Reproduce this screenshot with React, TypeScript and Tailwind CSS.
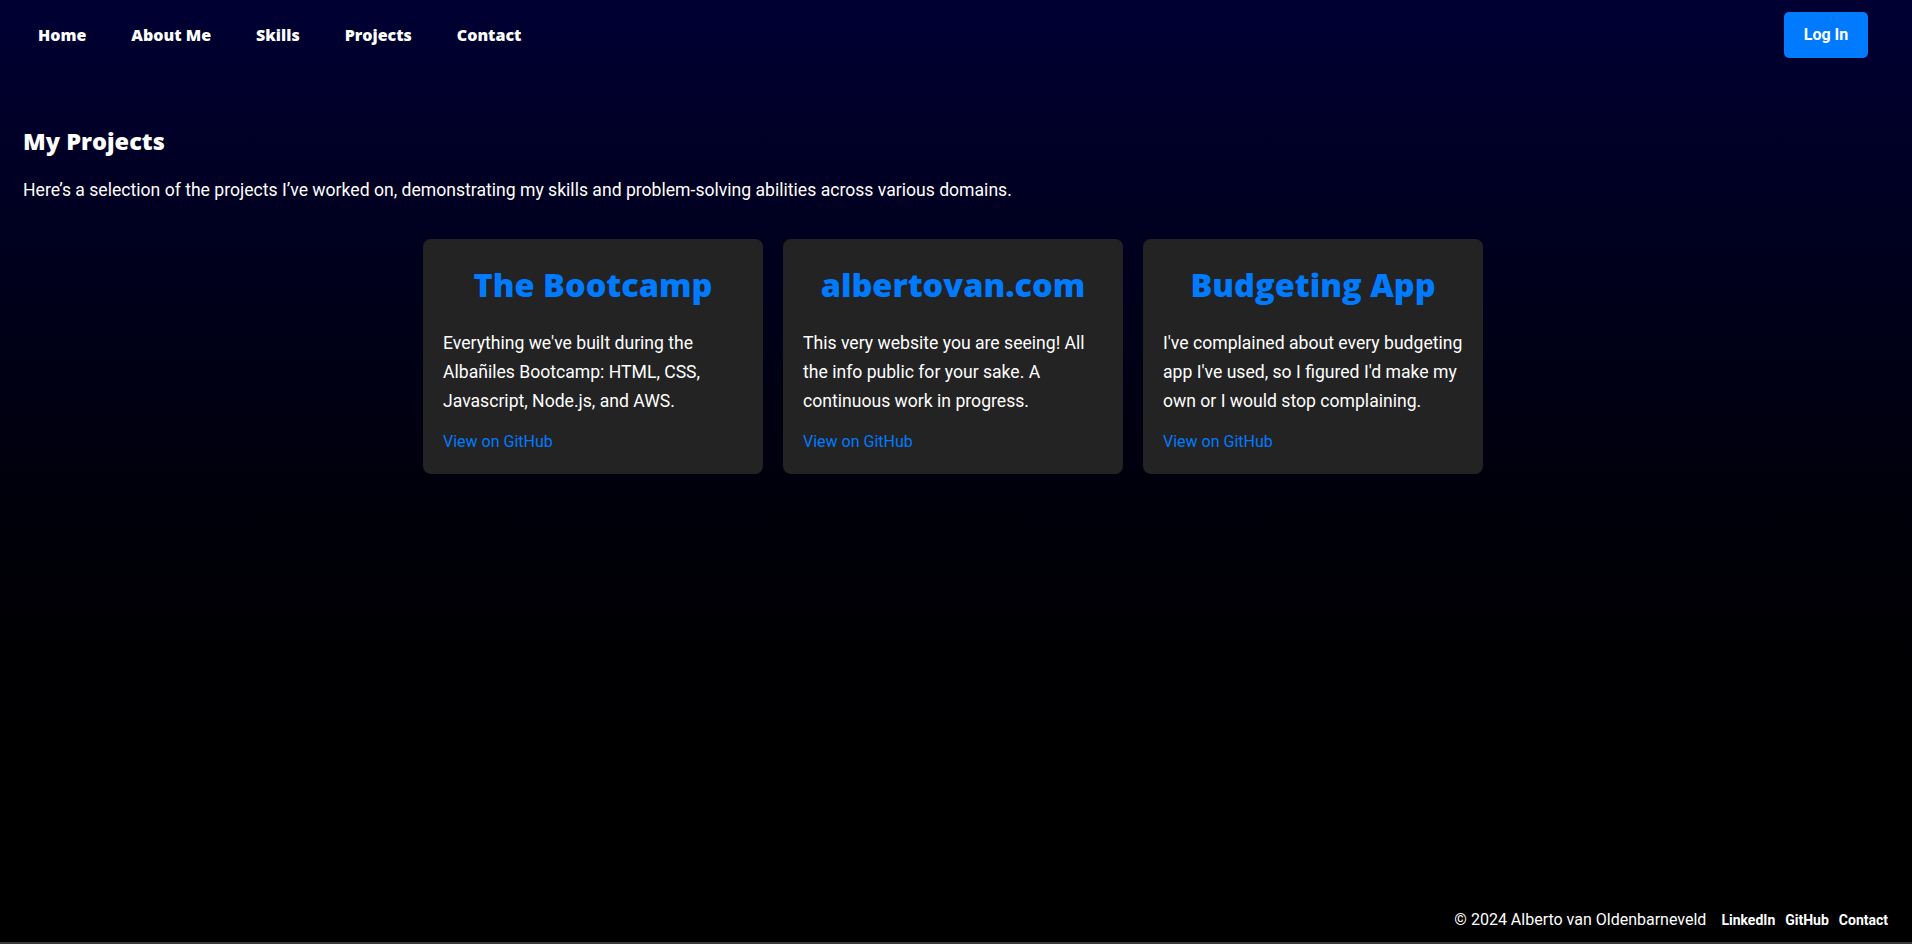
import React from "react";

const heading = { fontFamily: '"Open Sans", "Noto Sans", sans-serif' };
const body = { fontFamily: 'Roboto, "Liberation Sans", sans-serif' };

const projects = [
  {
    title: "The Bootcamp",
    text: "Everything we've built during the Albañiles Bootcamp: HTML, CSS, Javascript, Node.js, and AWS.",
  },
  {
    title: "albertovan.com",
    text: "This very website you are seeing! All the info public for your sake. A continuous work in progress.",
  },
  {
    title: "Budgeting App",
    text: "I've complained about every budgeting app I've used, so I figured I'd make my own or I would stop complaining.",
  },
];

export default function App() {
  return (
    <div
      className="flex h-[944px] flex-col bg-gradient-to-b from-[#000033] to-[#000000] text-white"
      style={body}
    >
      <nav className="flex h-[70px] shrink-0 items-center justify-between pl-[38px] pr-[44px]">
        <ul className="flex items-center gap-[45px] text-[16px] font-extrabold" style={heading}>
          {["Home", "About Me", "Skills", "Projects", "Contact"].map((l) => (
            <li key={l}>
              <a href="#" className="text-white">
                {l}
              </a>
            </li>
          ))}
        </ul>
        <button className="flex h-[46px] w-[84px] items-center justify-center rounded-[5px] bg-[#007bff] text-[16px] font-bold text-white">
          Log In
        </button>
      </nav>

      <main className="flex-1 px-[23px] pt-[55px]">
        <h1 className="text-[23.5px] font-extrabold leading-[32px]" style={heading}>
          My Projects
        </h1>
        <p className="mt-[21px] text-[17.6px] leading-[24px]">
          Here’s a selection of the projects I’ve worked on, demonstrating my skills and problem-solving abilities across various domains.
        </p>
        <div className="mt-[37px] flex justify-center gap-5 pr-[6px]">
          {projects.map((p) => (
            <div
              key={p.title}
              className="h-[235px] w-[340px] rounded-lg bg-[#232323] pl-5 pr-[14px] pt-[26px]"
            >
              <h2
                className="pr-[6px] text-center text-[32.5px] font-extrabold leading-[40px] text-[#007bff]"
                style={heading}
              >
                {p.title}
              </h2>
              <p className="mt-[24px] text-[17.6px] leading-[28.8px] text-white">{p.text}</p>
              <p className="mt-[13px] text-[16px] leading-[28.8px]">
                <a href="#" className="text-[#007bff]">
                  View on GitHub
                </a>
              </p>
            </div>
          ))}
        </div>
      </main>

      <footer className="flex shrink-0 items-baseline justify-end border-b-2 border-[#3a3a3a] pb-[10px] pr-[24px]">
        <span className="text-[16px] leading-[24px]">© 2024 Alberto van Oldenbarneveld</span>
        <div className="ml-[15px] flex gap-[10px] text-[14px] font-bold">
          <a href="#">LinkedIn</a>
          <a href="#">GitHub</a>
          <a href="#">Contact</a>
        </div>
      </footer>
    </div>
  );
}
